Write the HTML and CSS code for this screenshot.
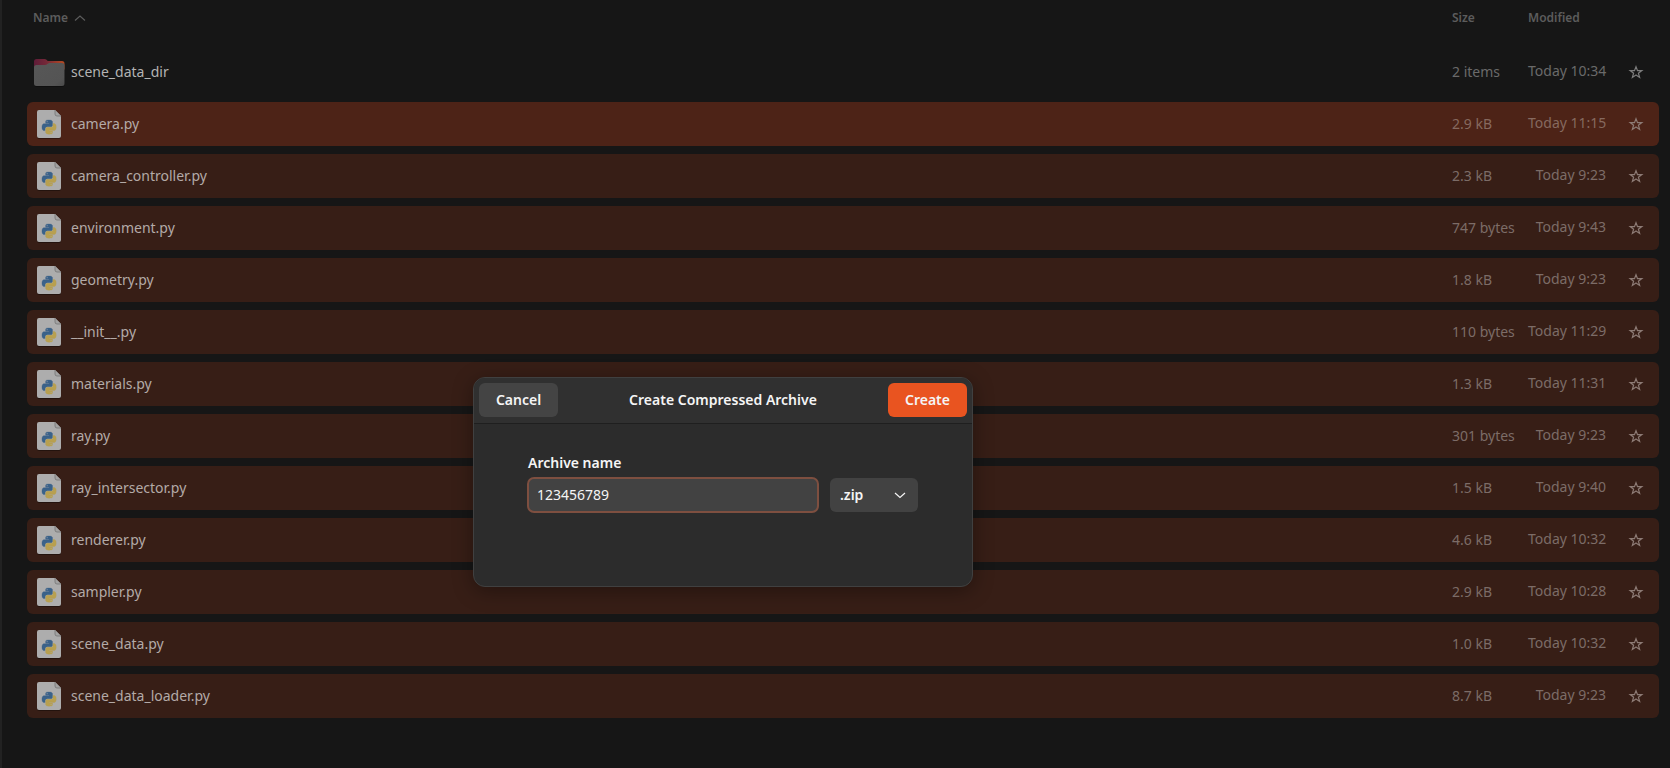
FILE: index.html
```html
<!DOCTYPE html>
<html lang="en">
<head>
<meta charset="utf-8">
<title>Files</title>
<link rel="stylesheet" href="styles.css">
</head>
<body>
<svg class="defs" aria-hidden="true">
  <defs>
    <linearGradient id="tab" x1="0" x2="1" y1="0" y2="0"><stop offset="0" stop-color="#5f1c38"/><stop offset=".4" stop-color="#742838"/><stop offset="1" stop-color="#b84a20"/></linearGradient>
    <linearGradient id="front" x1="0" x2="1" y1="0" y2="1"><stop offset="0" stop-color="#575757"/><stop offset=".8" stop-color="#545454"/><stop offset="1" stop-color="#4a4a4a"/></linearGradient>
    <path id="snake" d="M14.250.18l.9.2.73.26.59.3.45.32.34.34.25.34.16.33.1.3.04.26.02.2-.01.13V8.500l-.05.63-.13.55-.21.46-.26.38-.3.31-.33.25-.35.19-.35.14-.33.1-.3.07-.26.04-.21.02H8.770l-.69.05-.59.14-.5.22-.41.27-.33.32-.27.35-.2.36-.15.37-.1.35-.07.32-.04.27-.02.21v3.060H3.170l-.21-.03-.28-.07-.32-.12-.35-.18-.36-.26-.36-.36-.35-.46-.32-.59-.28-.73-.21-.88-.14-1.050-.05-1.230.06-1.220.16-1.040.24-.87.32-.71.36-.57.4-.44.42-.33.42-.24.4-.16.36-.1.32-.05.24-.01h.16l.06.01h8.160v-.83H6.180l-.01-2.750-.02-.37.05-.34.11-.31.17-.28.25-.26.31-.23.38-.2.44-.18.51-.15.58-.12.64-.1.71-.06.77-.04.84-.02 1.270.05zm-6.300 1.980l-.23.33-.08.41.08.41.23.34.33.22.41.09.41-.09.33-.22.23-.34.08-.41-.08-.41-.23-.33-.33-.22-.41-.09-.41.09z"/>
  </defs>
  <symbol id="folder" viewBox="0 0 32 32">
    <path d="M1 6.500q0-2.500 2.500-2.500h8q1.200 0 2 .8l1.200 1.200H29q2.500 0 2.500 2.500V28q0 3-2.500 3H3.500Q1 31 1 28z" fill="#0c0c0c" opacity=".6"/>
    <path d="M1 5.500q0-2.500 2.500-2.500h8q1.200 0 2 .8L14.700 5H29q2.500 0 2.500 2.500v6H1z" fill="url(#tab)"/>
    <path d="M1 11.500q0-2.500 2.500-2.500h8.500q1.300 0 2.200-.8l.9-.8q.6-.4 1.400-.4H29q2.500 0 2.500 2.500V27.500q0 2.500-2.500 2.500H3.500Q1 30 1 27.500z" fill="url(#front)"/>
  </symbol>
  <symbol id="py" viewBox="0 0 32 32">
    <path d="M6 3h16l6 6v20q0 2-2 2H6q-2 0-2-2V5q0-2 2-2z" fill="#000" opacity=".35"/>
    <path d="M6 2H22L28 8V28Q28 30 26 30H6Q4 30 4 28V4Q4 2 6 2z" fill="#adadad"/>
    <path d="M22 2v4q0 2 2 2H28" fill="#a2a2a2" stroke="#747474" stroke-width=".8"/>
    <g transform="translate(9 12) scale(.59)" stroke-width=".5">
      <use href="#snake" fill="#3a6289" stroke="#3a6289"/>
      <use href="#snake" transform="rotate(180 12 12)" fill="#b8a050" stroke="#b8a050"/>
    </g>
  </symbol>
  <symbol id="star" viewBox="0 0 16 16">
    <path d="M8 2.600l1.500 4h4.300l-3.400 2.600 1.200 4.200L8 10.900l-3.600 2.500 1.200-4.200L2.200 6.600h4.300z" fill="none" stroke="currentColor" stroke-width="1.200" stroke-linejoin="miter"/>
  </symbol>
</svg>

<main class="files">
  <table class="list">
    <colgroup><col><col class="col-size"><col class="col-modified"><col class="col-star"></colgroup>
    <thead>
      <tr>
        <th scope="col" aria-sort="ascending"><button class="sort" type="button">Name<svg class="caret" viewBox="0 0 12 12" aria-hidden="true"><path d="M1 8.500L6 4l5 4.500"/></svg></button></th>
        <th scope="col"><button class="sort" type="button">Size</button></th>
        <th scope="col"><button class="sort" type="button">Modified</button></th>
        <td></td>
      </tr>
    </thead>
    <tbody>
      <tr><td><span class="name"><svg class="icon"><use href="#folder"/></svg>scene_data_dir</span></td><td>2 items</td><td class="modified">Today 10:34</td><td class="fav"><button class="star" type="button" aria-label="Star scene_data_dir"><svg><use href="#star"/></svg></button></td></tr>
      <tr class="selected current"><td><span class="name"><svg class="icon"><use href="#py"/></svg>camera.py</span></td><td>2.9 kB</td><td class="modified">Today 11:15</td><td class="fav"><button class="star" type="button" aria-label="Star camera.py"><svg><use href="#star"/></svg></button></td></tr>
      <tr class="selected"><td><span class="name"><svg class="icon"><use href="#py"/></svg>camera_controller.py</span></td><td>2.3 kB</td><td class="modified">Today 9:23</td><td class="fav"><button class="star" type="button" aria-label="Star camera_controller.py"><svg><use href="#star"/></svg></button></td></tr>
      <tr class="selected"><td><span class="name"><svg class="icon"><use href="#py"/></svg>environment.py</span></td><td>747 bytes</td><td class="modified">Today 9:43</td><td class="fav"><button class="star" type="button" aria-label="Star environment.py"><svg><use href="#star"/></svg></button></td></tr>
      <tr class="selected"><td><span class="name"><svg class="icon"><use href="#py"/></svg>geometry.py</span></td><td>1.8 kB</td><td class="modified">Today 9:23</td><td class="fav"><button class="star" type="button" aria-label="Star geometry.py"><svg><use href="#star"/></svg></button></td></tr>
      <tr class="selected"><td><span class="name"><svg class="icon"><use href="#py"/></svg>__init__.py</span></td><td>110 bytes</td><td class="modified">Today 11:29</td><td class="fav"><button class="star" type="button" aria-label="Star __init__.py"><svg><use href="#star"/></svg></button></td></tr>
      <tr class="selected"><td><span class="name"><svg class="icon"><use href="#py"/></svg>materials.py</span></td><td>1.3 kB</td><td class="modified">Today 11:31</td><td class="fav"><button class="star" type="button" aria-label="Star materials.py"><svg><use href="#star"/></svg></button></td></tr>
      <tr class="selected"><td><span class="name"><svg class="icon"><use href="#py"/></svg>ray.py</span></td><td>301 bytes</td><td class="modified">Today 9:23</td><td class="fav"><button class="star" type="button" aria-label="Star ray.py"><svg><use href="#star"/></svg></button></td></tr>
      <tr class="selected"><td><span class="name"><svg class="icon"><use href="#py"/></svg>ray_intersector.py</span></td><td>1.5 kB</td><td class="modified">Today 9:40</td><td class="fav"><button class="star" type="button" aria-label="Star ray_intersector.py"><svg><use href="#star"/></svg></button></td></tr>
      <tr class="selected"><td><span class="name"><svg class="icon"><use href="#py"/></svg>renderer.py</span></td><td>4.6 kB</td><td class="modified">Today 10:32</td><td class="fav"><button class="star" type="button" aria-label="Star renderer.py"><svg><use href="#star"/></svg></button></td></tr>
      <tr class="selected"><td><span class="name"><svg class="icon"><use href="#py"/></svg>sampler.py</span></td><td>2.9 kB</td><td class="modified">Today 10:28</td><td class="fav"><button class="star" type="button" aria-label="Star sampler.py"><svg><use href="#star"/></svg></button></td></tr>
      <tr class="selected"><td><span class="name"><svg class="icon"><use href="#py"/></svg>scene_data.py</span></td><td>1.0 kB</td><td class="modified">Today 10:32</td><td class="fav"><button class="star" type="button" aria-label="Star scene_data.py"><svg><use href="#star"/></svg></button></td></tr>
      <tr class="selected"><td><span class="name"><svg class="icon"><use href="#py"/></svg>scene_data_loader.py</span></td><td>8.7 kB</td><td class="modified">Today 9:23</td><td class="fav"><button class="star" type="button" aria-label="Star scene_data_loader.py"><svg><use href="#star"/></svg></button></td></tr>
    </tbody>
  </table>
</main>

<form class="dialog" role="dialog" aria-labelledby="dialog-title">
  <header class="dialog-bar">
    <button class="button" type="button">Cancel</button>
    <h1 class="dialog-title" id="dialog-title">Create Compressed Archive</h1>
    <button class="button primary" type="submit">Create</button>
  </header>
  <div class="dialog-body">
    <label class="label" for="archive-name">Archive name</label>
    <div class="fields">
      <input class="entry" id="archive-name" type="text" value="123456789">
      <div class="format">
        <select class="select" aria-label="Archive format"><option>.zip</option><option>.tar.xz</option><option>.7z</option></select>
        <svg class="caret" viewBox="0 0 12 12" aria-hidden="true"><path d="M1 4L6 8.500 11 4"/></svg>
      </div>
    </div>
  </div>
</form>
</body>
</html>
```
FILE: styles.css
```css
* {
  box-sizing: border-box;
}

body {
  margin: 0;
  min-height: 100vh;
  border-left: 2px solid #222;
  background: #161616;
  color: #b3b3b3;
  font: 14px/20px "Noto Sans", "Open Sans", sans-serif;
}

button,
input,
select {
  margin: 0;
  padding: 0;
  border: 0;
  background: none;
  color: inherit;
  font: inherit;
}

.defs {
  position: absolute;
  width: 0;
  height: 0;
}

.files {
  padding: 0 11px 42px 25px;
}

.list {
  width: 100%;
  table-layout: fixed;
  border-spacing: 0 8px;
}

.col-size {
  width: 76px;
}

.col-modified {
  width: 78px;
}

.col-star {
  width: 53px;
}

th,
td {
  padding: 0;
  text-align: left;
  white-space: nowrap;
}

th {
  padding-bottom: 14px;
  color: #5c5c5c;
  font-size: 12px;
  font-weight: 600;
  line-height: 20px;
}

th:first-child,
td:first-child {
  padding-left: 6px;
}

.sort {
  display: flex;
  align-items: center;
  gap: 6px;
}

.caret {
  width: 12px;
  height: 12px;
  fill: none;
  stroke: currentColor;
  stroke-width: 1.2;
}

tbody td {
  height: 44px;
  color: #6a6a6a;
}

tbody td:first-child {
  color: #b3b3b3;
}

.name {
  display: flex;
  align-items: center;
  gap: 6px;
}

.icon {
  width: 32px;
  height: 32px;
}

.selected td {
  background: #371e16;
  color: #7c6c67;
}

.selected td:first-child {
  border-radius: 6px 0 0 6px;
  color: #b3aaa7;
}

.selected td:last-child {
  border-radius: 0 6px 6px 0;
}

.current td {
  background: #4d2317;
  color: #86695f;
}

tbody .modified {
  padding-bottom: 2px;
  text-align: right;
}

.fav {
  padding-left: 22px;
}

.star {
  display: block;
  width: 16px;
  height: 16px;
  color: #7d7d7d;
}

.selected .star {
  color: #8d7b75;
}

.star svg {
  display: block;
  width: 16px;
  height: 16px;
}

.dialog {
  position: absolute;
  top: 377px;
  left: 473px;
  width: 500px;
  border: 1px solid #404040;
  border-radius: 12px;
  overflow: hidden;
  background: #2c2c2c;
  box-shadow: 0 4px 20px rgba(0, 0, 0, 0.35);
  color: #f5f5f5;
}

.dialog-bar {
  display: flex;
  align-items: center;
  justify-content: space-between;
  padding: 5px 5px 6px;
  border-bottom: 1px solid #1f1f1f;
  background: #303030;
}

.dialog-title {
  margin: 0;
  font-size: 14px;
  font-weight: 600;
}

.button {
  width: 79px;
  height: 34px;
  border-radius: 6px;
  background: #444;
  font-weight: 600;
}

.primary {
  background: #e95420;
}

.dialog-body {
  padding: 29px 54px 73px 53px;
}

.label {
  display: block;
  margin-bottom: 4px;
  padding-left: 1px;
  font-weight: 600;
}

.fields {
  display: flex;
  align-items: center;
  gap: 11px;
}

.entry {
  flex: 1;
  min-width: 0;
  height: 36px;
  padding: 0 8px 2px;
  border: 2px solid #7e4f40;
  border-radius: 7px;
  outline: 0;
  background: #424242;
}

.format {
  display: grid;
  align-items: center;
  width: 88px;
}

.select,
.format .caret {
  grid-area: 1 / 1;
}

.select {
  width: 100%;
  height: 34px;
  padding: 0 10px;
  border-radius: 6px;
  appearance: none;
  background: #424242;
  font-weight: 600;
}

.format .caret {
  justify-self: end;
  margin-right: 12px;
  pointer-events: none;
}
```
